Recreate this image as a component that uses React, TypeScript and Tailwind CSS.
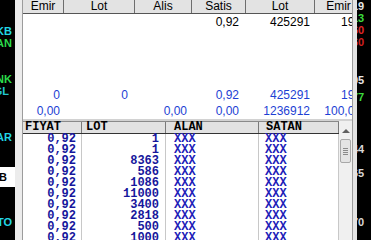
import React from 'react';

// Derinlik / emir tablosu penceresi
const upperCols = [
  { label: 'Emir', w: 'w-[41px]', pr: 'pr-[4px]' },
  { label: 'Lot', w: 'w-[71px]', pr: 'pr-[7px]' },
  { label: 'Alis', w: 'w-[57px]', pr: 'pr-[5px]' },
  { label: 'Satis', w: 'w-[54px]', pr: 'pr-[7px]' },
  { label: 'Lot', w: 'w-[69px]', pr: 'pr-[5px]' },
  { label: 'Emir', w: 'w-[48px]', pr: 'pr-[2px]' },
];

const firstRow = ['', '', '', '0,92', '425291', '190'];
const totals = [
  ['0', '0', '', '0,92', '425291', '190'],
  ['0,00', '', '0,00', '0,00', '1236912', '100,00'],
];

const trades = [
  ['0,92', '1'],
  ['0,92', '1'],
  ['0,92', '8363'],
  ['0,92', '586'],
  ['0,92', '1086'],
  ['0,92', '11000'],
  ['0,92', '3400'],
  ['0,92', '2818'],
  ['0,92', '500'],
  ['0,92', '1000'],
];

const leftItems = [
  { t: 'KB', c: 'text-[#22d6e6]', cls: 'mt-[25px] pr-[3px]' },
  { t: 'AN', c: 'text-[#2bdc4a]', cls: 'pr-[3px]' },
  { t: 'NK', c: 'text-[#2bdc4a]', cls: 'mt-[24px] pr-[3px]' },
  { t: 'GL', c: 'text-[#22c8d0]', cls: 'pr-[6px]' },
  { t: 'AR', c: 'text-[#22d6e6]', cls: 'mt-[34px] pr-[3px]' },
];

const rightItems = [
  { t: '19', c: 'text-[#e6e6e6]', mt: 'mt-0' },
  { t: '13', c: 'text-[#3ddc3d]', mt: 'mt-0' },
  { t: '60', c: 'text-[#e02828]', mt: 'mt-0' },
  { t: '60', c: 'text-[#d02020]', mt: 'mt-0' },
  { t: '05', c: 'text-[#e6e6e6]', mt: 'mt-[26px]' },
  { t: '77', c: 'text-[#3ddc3d]', mt: 'mt-[5px]' },
  { t: '44', c: 'text-[#d8d8d8]', mt: 'mt-[40px]' },
  { t: '65', c: 'text-[#d8d8d8]', mt: 'mt-[12px]' },
  { t: '70', c: 'text-[#d8d8d8]', mt: 'mt-[37px]' },
];

function UpperRow({ values, color }: { values: string[]; color: string }) {
  return (
    <div className={`flex h-[16px] shrink-0 items-center ${color}`}>
      {upperCols.map((col, i) => (
        <div key={i} className={`${col.w} ${col.pr} shrink-0 text-right leading-[16px] whitespace-nowrap`}>
          {values[i]}
        </div>
      ))}
    </div>
  );
}

export default function App() {
  return (
    <div className="flex w-[371px] h-[240px] overflow-hidden bg-black font-['Liberation_Sans',Arial,sans-serif]">
      {/* Sol liste */}
      <div className="w-[15px] shrink-0 flex flex-col overflow-hidden text-[11px] font-bold leading-[12px]">
        {leftItems.map((it, i) => (
          <div key={i} className={`flex justify-end whitespace-nowrap ${it.c} ${it.cls}`}>
            {it.t}
          </div>
        ))}
        <div className="mt-[24px] h-[20px] bg-white flex items-center justify-end pr-[8px] text-black">B</div>
        <div className="mt-[29px] flex justify-end pr-[3px] text-[#22d6e6]">TO</div>
      </div>
      <div className="w-[7px] shrink-0 bg-[#ececec]" />

      {/* Ana panel */}
      <div className="w-[331px] shrink-0 flex flex-col border-x border-[#9c9c9c] bg-white">
        <div className="h-[119px] flex flex-col overflow-hidden text-[12px] text-black">
          <div className="flex h-[14px] shrink-0 border-b border-[#555555] bg-[#e3e3e3]">
            {upperCols.map((col, i) => (
              <div
                key={i}
                className={`${col.w} shrink-0 border-r border-[#6e6e6e] text-center leading-[13px]`}
              >
                {col.label}
              </div>
            ))}
          </div>
          <UpperRow values={firstRow} color="text-black" />
          <div className="flex-1" />
          {totals.map((r, i) => (
            <UpperRow key={i} values={r} color="text-[#1d3fd4]" />
          ))}
        </div>

        <div className="h-[2px] shrink-0 bg-[#d2d2d2]" />

        <div className="flex flex-1 overflow-hidden">
          <div className="flex flex-col w-[316px] shrink-0 font-['Liberation_Mono',monospace] font-bold text-[12px]">
            <div className="flex h-[13px] shrink-0 border-t border-b border-t-[#8a8a8a] border-b-[#333333] bg-[#e2e2e2] text-black leading-[11px]">
              <div className="w-[59px] shrink-0 border-r border-[#7a7a7a] pl-[2px]">FIYAT</div>
              <div className="w-[84px] shrink-0 border-r border-[#7a7a7a] pl-[4px]">LOT</div>
              <div className="w-[93px] shrink-0 border-r border-[#7a7a7a] pl-[8px]">ALAN</div>
              <div className="w-[80px] shrink-0 border-r border-[#7a7a7a] pl-[7px]">SATAN</div>
            </div>
            {trades.map(([price, lot], i) => (
              <div key={i} className="flex h-[11px] shrink-0 leading-[11px]">
                <div className="w-[59px] shrink-0 border-r border-[#c8c8c8] pr-[5px] text-right text-[#16169c]">{price}</div>
                <div className="w-[84px] shrink-0 border-r border-[#c8c8c8] pr-[6px] text-right text-[#16169c]">{lot}</div>
                <div className="w-[93px] shrink-0 border-r border-[#c8c8c8] pl-[8px] text-[#2020b8]">XXX</div>
                <div className="w-[80px] shrink-0 border-r border-[#c8c8c8] pl-[6px] text-[#2020b8]">XXX</div>
              </div>
            ))}
          </div>

          {/* Kaydirma cubugu */}
          <div className="w-[13px] shrink-0 flex flex-col bg-[#f0f0f0]">
            <div className="h-[18px] shrink-0 flex items-center justify-center pt-[2px]">
              <div className="w-0 h-0 border-x-[4px] border-x-transparent border-b-[4px] border-b-[#606060]" />
            </div>
            <div className="mx-[1px] h-[24px] rounded-[2px] border border-[#a8a8a8] bg-[#e4e4e4] flex flex-col items-center justify-center gap-[1px]">
              <div className="w-[5px] h-px bg-[#8a8a8a]" />
              <div className="w-[5px] h-px bg-[#8a8a8a]" />
              <div className="w-[5px] h-px bg-[#8a8a8a]" />
              <div className="w-[5px] h-px bg-[#8a8a8a]" />
            </div>
          </div>
        </div>
      </div>

      <div className="w-[4px] shrink-0 bg-[#e4e4e4]" />
      {/* Sag liste */}
      <div className="w-[14px] shrink-0 flex flex-col overflow-hidden text-[11px] font-bold leading-[12px]">
        {rightItems.map((it, i) => (
          <div key={i} className={`ml-[-5px] whitespace-nowrap ${it.c} ${it.mt}`}>
            {it.t}
          </div>
        ))}
      </div>
    </div>
  );
}
